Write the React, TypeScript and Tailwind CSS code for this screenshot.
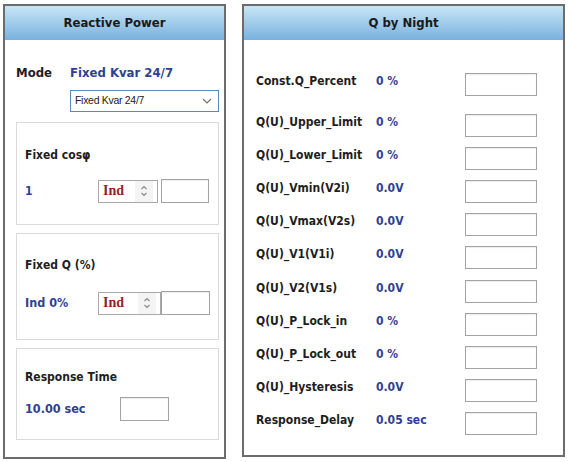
import React from "react";

const LABEL = "font-['DejaVu_Sans_Condensed','DejaVu_Sans',sans-serif] font-bold";

type Row = { label: string; value: string; gap: string };

const nightRows: Row[] = [
  { label: "Const.Q_Percent", value: "0 %", gap: "mt-[33px]" },
  { label: "Q(U)_Upper_Limit", value: "0 %", gap: "mt-[18px]" },
  { label: "Q(U)_Lower_Limit", value: "0 %", gap: "mt-[10px]" },
  { label: "Q(U)_Vmin(V2i)", value: "0.0V", gap: "mt-[10px]" },
  { label: "Q(U)_Vmax(V2s)", value: "0.0V", gap: "mt-[10px]" },
  { label: "Q(U)_V1(V1i)", value: "0.0V", gap: "mt-[10px]" },
  { label: "Q(U)_V2(V1s)", value: "0.0V", gap: "mt-[11px]" },
  { label: "Q(U)_P_Lock_in", value: "0 %", gap: "mt-[10px]" },
  { label: "Q(U)_P_Lock_out", value: "0 %", gap: "mt-[10px]" },
  { label: "Q(U)_Hysteresis", value: "0.0V", gap: "mt-[10px]" },
  { label: "Response_Delay", value: "0.05 sec", gap: "mt-[10px]" },
];

function PanelHeader({ title }: { title: string }) {
  return (
    <div
      className={`flex h-[34px] items-center justify-center bg-gradient-to-b from-[#c8e6f5] to-[#7ab1df] text-[13px] text-[#1a1a1a] ${LABEL}`}
    >
      {title}
    </div>
  );
}

function TextBox({ className }: { className: string }) {
  return (
    <div
      className={`border border-[#a3a3a3] bg-white shadow-[inset_0_1px_1px_rgba(0,0,0,0.08)] ${className}`}
    />
  );
}

function Spinner({ width }: { width: string }) {
  return (
    <div
      className={`flex h-[23px] items-center border border-[#a8a8a8] bg-white ${width}`}
    >
      <span className="pl-[4px] font-['Liberation_Serif',serif] text-[14px] font-bold leading-none text-[#8e2424]">
        Ind
      </span>
      <div className="ml-auto mr-[4px] flex h-full w-[18px] flex-col items-center justify-center bg-[#f4f4f4]">
        <svg width="8" height="14" viewBox="0 0 8 14" fill="none">
          <path d="M1.5 5 L4 2.5 L6.5 5" stroke="#8a8a8a" strokeWidth="1.2" />
          <path d="M1.5 9 L4 11.5 L6.5 9" stroke="#8a8a8a" strokeWidth="1.2" />
        </svg>
      </div>
    </div>
  );
}

function Card({
  title,
  className,
  children,
}: {
  title: string;
  className: string;
  children: React.ReactNode;
}) {
  return (
    <div
      className={`ml-[11px] mr-[5px] border border-[#dadada] bg-white pl-[8px] ${className}`}
    >
      <div className={`text-[12px] leading-4 text-[#1e1e1e] ${LABEL}`}>{title}</div>
      {children}
    </div>
  );
}

export default function App() {
  const blue = "text-[#2f3f94]";
  return (
    <div className="flex h-[462px] w-[569px] bg-white pl-[3px] pt-[4px]">
      <div className="flex h-[455px] w-[223px] flex-col border-2 border-[#6c6c6c] bg-white">
        <PanelHeader title="Reactive Power" />
        <div className={`mt-[25px] flex pl-[11px] text-[13px] leading-4 ${LABEL}`}>
          <span className="w-[54px] text-[#1e1e1e]">Mode</span>
          <span className={blue}>Fixed Kvar 24/7</span>
        </div>
        <div className="ml-[65px] mr-[5px] mt-[9px] flex h-[22px] items-center border border-[#5b86c0] bg-white pl-[4px] pr-[6px]">
          <span className="font-['Liberation_Sans',sans-serif] text-[10.5px] tracking-[-0.3px] text-[#222]">
            Fixed Kvar 24/7
          </span>
          <svg className="ml-auto" width="10" height="6" viewBox="0 0 10 6" fill="none">
            <path d="M1 1 L5 5 L9 1" stroke="#707070" strokeWidth="1.2" />
          </svg>
        </div>

        <Card title="Fixed cosφ" className="mt-[10px] h-[103px] pt-[24px]">
          <div className="mt-[16px] flex items-center">
            <span className={`w-[73px] text-[12px] ${blue} ${LABEL}`}>1</span>
            <Spinner width="w-[60px]" />
            <TextBox className="ml-[3px] h-[24px] w-[48px]" />
          </div>
        </Card>

        <Card title="Fixed Q (%)" className="mt-[8px] h-[107px] pt-[23px]">
          <div className="mt-[18px] flex items-center">
            <span className={`w-[73px] text-[12.5px] ${blue} ${LABEL}`}>Ind 0%</span>
            <Spinner width="w-[63px]" />
            <TextBox className="ml-[0px] h-[24px] w-[49px]" />
          </div>
        </Card>

        <Card title="Response Time" className="mt-[8px] h-[92px] pt-[20px]">
          <div className="mt-[12px] flex items-center">
            <span className={`w-[95px] text-[12.5px] ${blue} ${LABEL}`}>10.00 sec</span>
            <TextBox className="h-[24px] w-[49px]" />
          </div>
        </Card>
      </div>

      <div className="ml-[16px] flex h-[453px] w-[323px] flex-col border-2 border-[#6c6c6c] bg-white">
        <PanelHeader title="Q by Night" />
        {nightRows.map((r) => (
          <div key={r.label} className={`flex items-start pl-[12px] ${r.gap}`}>
            <span className={`w-[120px] text-[12px] leading-4 text-[#1e1e1e] ${LABEL}`}>
              {r.label}
            </span>
            <span className={`w-[89px] text-[12px] leading-4 ${blue} ${LABEL}`}>{r.value}</span>
            <TextBox className="h-[23px] w-[72px]" />
          </div>
        ))}
      </div>
    </div>
  );
}
